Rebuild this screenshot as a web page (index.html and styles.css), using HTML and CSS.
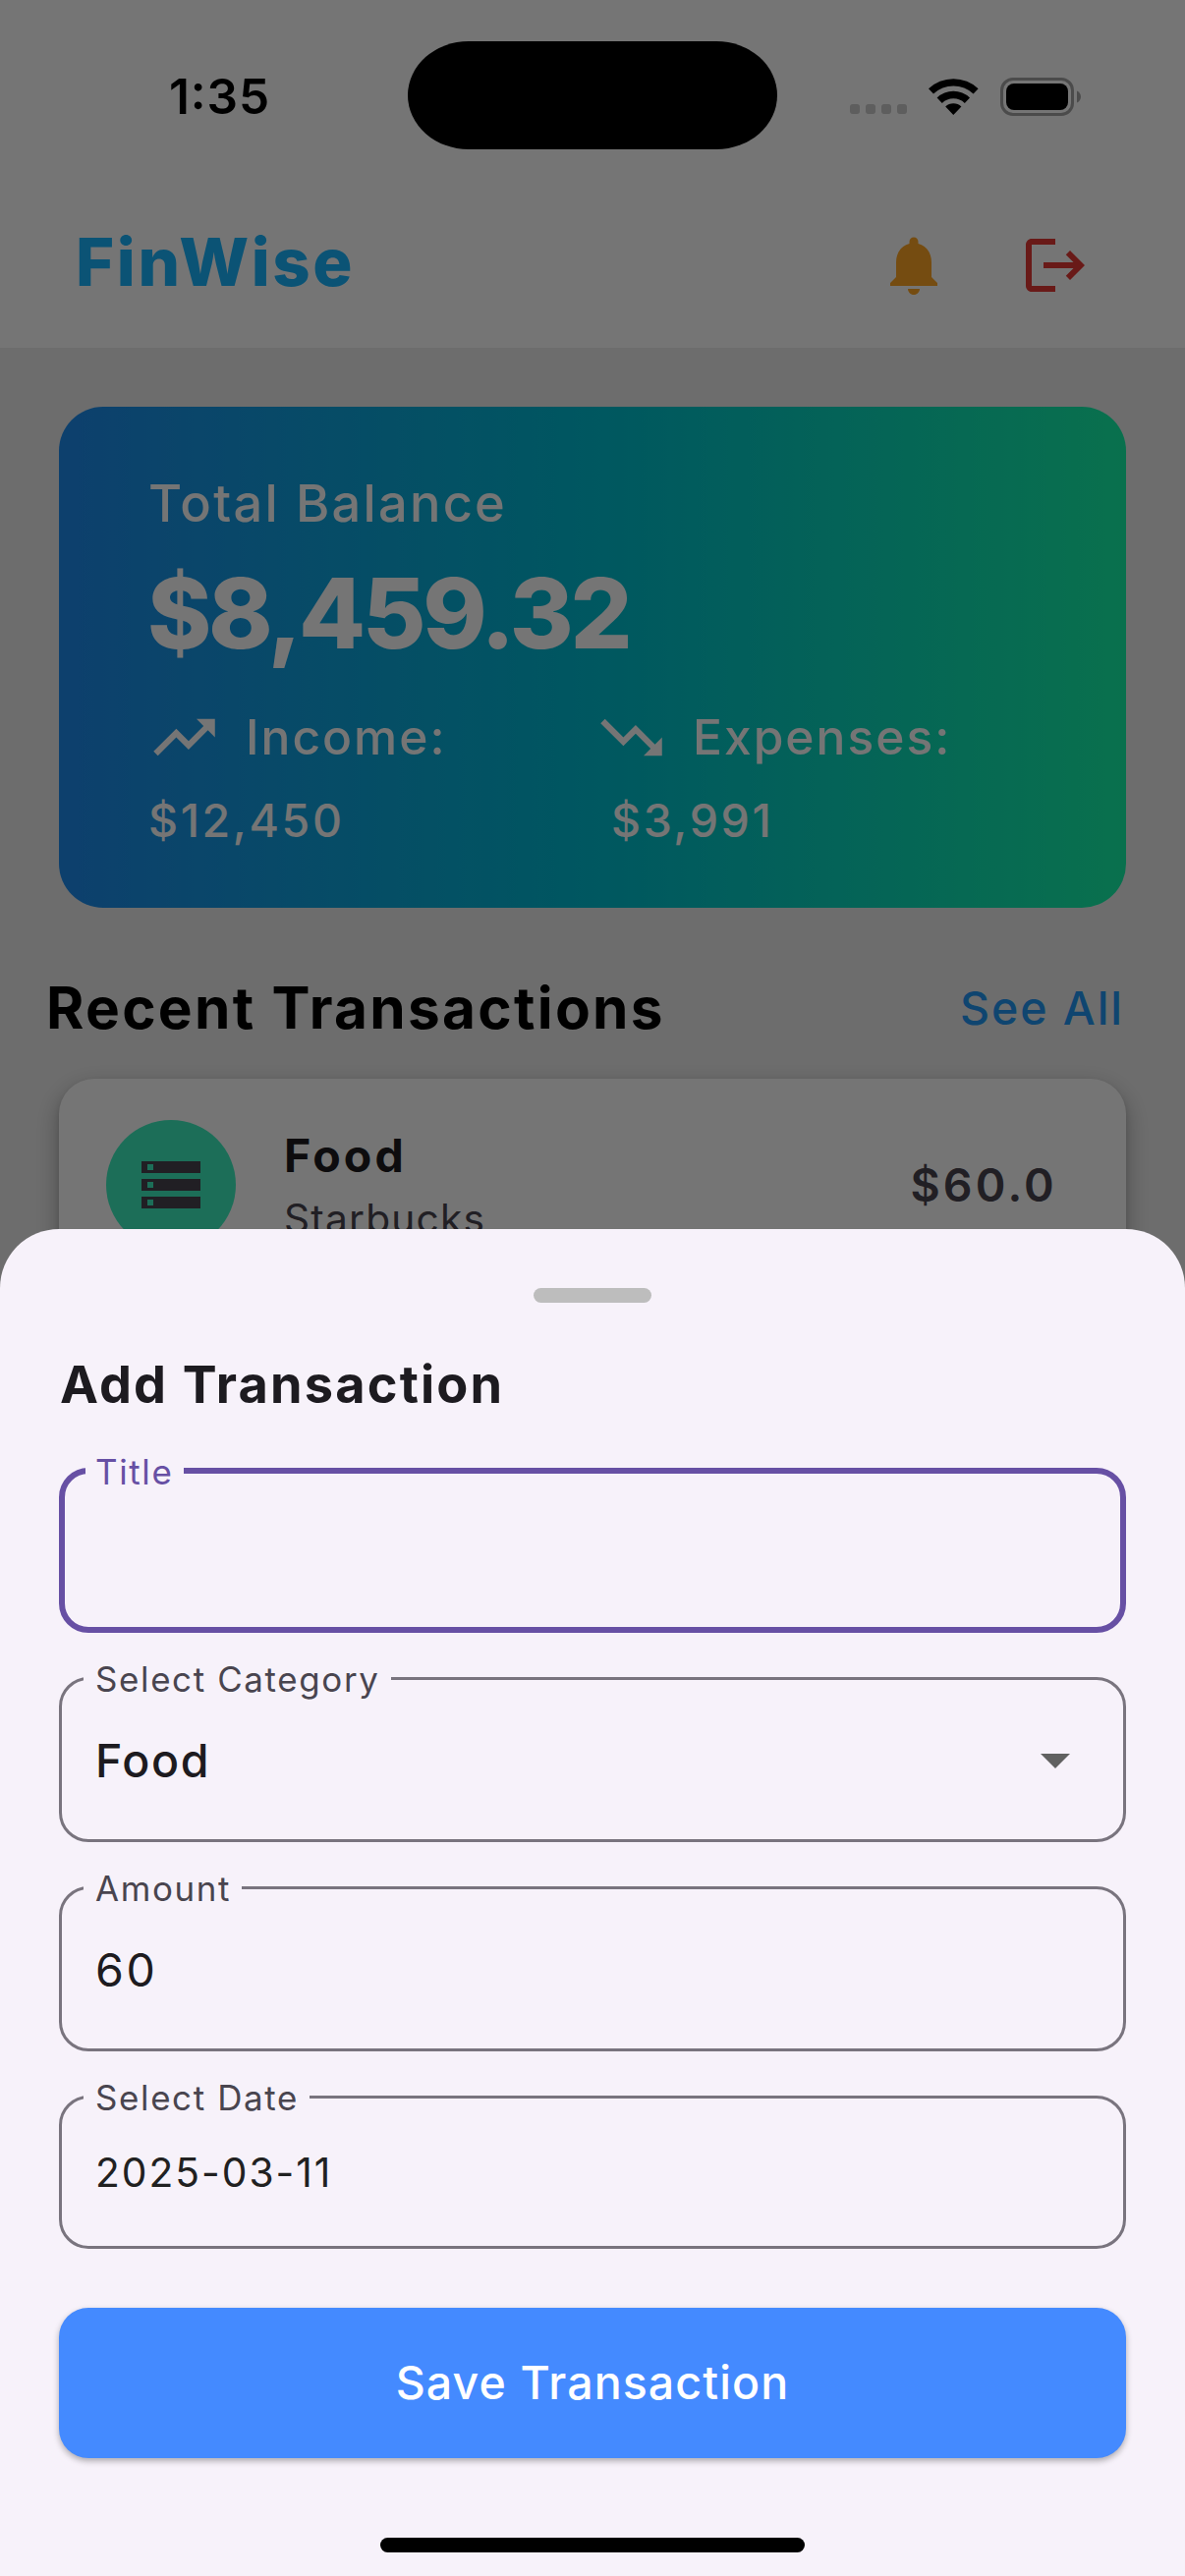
FILE: index.html
```html
<!DOCTYPE html>
<html lang="en">
<head>
<meta charset="utf-8">
<title>FinWise</title>
<link rel="stylesheet" href="styles.css">
</head>
<body>
<div class="screen">
  <div class="status-bar">
    <span class="time">1:35</span>
    <span class="island"></span>
    <span class="dots"><i></i><i></i><i></i><i></i></span>
    <svg class="wifi" viewBox="0 0 51 37"><path d="M0 10.3A36.8 36.8 0 0 1 50.6 10.3L45.6 15.6A29.5 29.5 0 0 0 5 15.6ZM8.6 19.4A24.3 24.3 0 0 1 42 19.4L36.8 24.9A16.7 16.7 0 0 0 13.8 24.9ZM17.2 28.5A11.7 11.7 0 0 1 33.4 28.5L25.3 37Z"/></svg>
    <svg class="battery" viewBox="0 0 82 39"><rect class="battery-case" x="1.5" y="1.5" width="72" height="36" rx="11.5"/><rect x="6" y="6" width="63" height="27" rx="8"/><path class="battery-cap" d="M78 13.5C83.300 15.500 83.300 23.500 78 25.500Z"/></svg>
  </div>

  <header class="app-bar">
    <h1 class="brand">FinWise</h1>
    <svg class="icon icon-bell" viewBox="0 0 24 24"><path d="M12 22c1.100 0 2-.9 2-2h-4c0 1.100.89 2 2 2zm6-6v-5c0-3.070-1.640-5.640-4.500-6.320V4c0-.83-.67-1.500-1.500-1.500s-1.500.67-1.500 1.500v.68C7.630 5.360 6 7.920 6 11v5l-2 2v1h16v-1l-2-2z"/></svg>
    <svg class="icon icon-logout" viewBox="0 0 24 24"><path d="M17 7l-1.410 1.410L18.170 11H8v2h10.170l-2.580 2.580L17 17l5-5zM4 5h8V3H4c-1.100 0-2 .9-2 2v14c0 1.100.9 2 2 2h8v-2H4V5z"/></svg>
  </header>

  <main class="content">
    <section class="balance">
      <div class="balance-label">Total Balance</div>
      <div class="balance-total">$8,459.32</div>
      <div class="flows">
        <span class="flow"><svg class="trend" viewBox="0 0 24 24"><path d="M16 6l2.290 2.290-4.880 4.880-4-4L2 16.590 3.410 18l6-6 4 4 6.300-6.290L22 12V6z"/></svg>Income:</span>
        <span class="flow"><svg class="trend" viewBox="0 0 24 24"><path d="M16 18l2.290-2.290-4.880-4.880-4 4L2 7.410 3.410 6l6 6 4-4 6.300 6.290L22 12v6z"/></svg>Expenses:</span>
      </div>
      <div class="flow-values"><span>$12,450</span><span>$3,991</span></div>
    </section>

    <div class="section-head">
      <h2 class="section-title">Recent Transactions</h2>
      <a class="see-all">See All</a>
    </div>

    <article class="transaction">
      <span class="avatar"><svg class="storage" viewBox="0 0 24 24"><path d="M2 20h20v-4H2v4zm2-3h2v2H4v-2zM2 4v4h20V4H2zm4 3H4V5h2v2zm-4 7h20v-4H2v4zm2-3h2v2H4v-2z"/></svg></span>
      <div class="transaction-text">
        <div class="transaction-name">Food</div>
        <div class="transaction-place">Starbucks</div>
      </div>
      <div class="transaction-amount">$60.0</div>
    </article>
  </main>

  <div class="scrim"></div>

  <section class="sheet">
    <div class="handle"></div>
    <h2 class="sheet-title">Add Transaction</h2>
    <form class="form">
      <div class="field field-focused"><span class="field-label">Title</span></div>
      <div class="field"><span class="field-label">Select Category</span><span class="field-value field-value-medium">Food</span><svg class="arrow" viewBox="0 0 10 5"><path d="M0 0l5 5 5-5z"/></svg></div>
      <div class="field"><span class="field-label">Amount</span><span class="field-value">60</span></div>
      <div class="field field-date"><span class="field-label">Select Date</span><span class="field-value field-value-small">2025-03-11</span></div>
    </form>
    <button class="save" type="button">Save Transaction</button>
    <div class="home-indicator"></div>
  </section>
</div>
</body>
</html>
```
FILE: styles.css
```css
* { box-sizing: border-box; }

body {
  margin: 0;
  font-family: Inter, "Liberation Sans", sans-serif;
}

h1, h2 { margin: 0; }

.screen {
  position: relative;
  width: 1206px;
  height: 2622px;
  overflow: hidden;
  background: #fff;
}

/* Status bar: stays above the scrim */
.status-bar {
  position: relative;
  z-index: 3;
  display: flex;
  align-items: center;
  height: 186px;
  padding: 10px 0 0 172px;
}

.time {
  width: 243px;
  font-size: 49.5px;
  font-weight: 600;
  line-height: 60px;
  letter-spacing: .9px;
  font-feature-settings: "calt";
}

.island {
  width: 376px;
  height: 110px;
  margin-top: -2px;
  border-radius: 62px / 55px;
  background: #000;
}

.dots {
  display: flex;
  gap: 6px;
  margin: 26px 0 0 74px;
}

.dots i {
  width: 10px;
  height: 10px;
  border-radius: 3px;
  background: #5e5e5e;
}

.wifi {
  width: 51px;
  height: 37px;
  margin-left: 22px;
}

.battery {
  width: 82px;
  height: 39px;
  margin-left: 22px;
}

.battery-case {
  fill: none;
  stroke: #4b4b4b;
  stroke-width: 3;
}

.battery-cap { fill: #4b4b4b; }

/* App bar */
.app-bar {
  display: flex;
  align-items: center;
  height: 168px;
  padding: 0 96px 0 77px;
}

.brand {
  flex: 1;
  padding-bottom: 6px;
  color: #1ab6ff;
  font-size: 67px;
  font-weight: 800;
  line-height: 80px;
  letter-spacing: 2.6px;
}

.icon {
  width: 72px;
  height: 72px;
}

.icon-bell { fill: #ffa726; }

.icon-logout {
  margin-left: 72px;
  fill: #e53935;
}

/* Dashboard */
.content {
  height: 2268px;
  padding: 60px 60px 0;
  background: #eee;
}

.balance {
  height: 510px;
  padding: 58px 90px 0;
  border-radius: 45px;
  background: linear-gradient(90deg, #1e8bee, #00bed2 50%, #15f5a9);
  color: #fff;
}

.balance-label {
  padding-left: 1px;
  font-size: 52.3px;
  font-weight: 500;
  line-height: 80px;
  letter-spacing: 2.25px;
}

.balance-total {
  font-size: 99px;
  font-weight: 800;
  line-height: 144px;
  letter-spacing: -3.3px;
}

.flows {
  display: grid;
  grid-template-columns: 455px auto;
  height: 108px;
  align-items: center;
  font-size: 49.7px;
  font-weight: 500;
  line-height: 60px;
  letter-spacing: 2px;
}

.flow {
  display: flex;
  align-items: center;
  gap: 25px;
}

.trend {
  width: 75px;
  height: 75px;
  fill: #fff;
}

.flow-values {
  display: grid;
  grid-template-columns: 471px auto;
  padding-left: 1px;
  font-size: 46.5px;
  font-weight: 500;
  line-height: 62px;
  letter-spacing: 2.6px;
}

.section-head {
  display: flex;
  align-items: center;
  justify-content: space-between;
  height: 174px;
  margin: 0 2px 0 -13px;
  padding-top: 30px;
}

.section-title {
  color: #000;
  font-size: 58.5px;
  font-weight: 700;
  line-height: 72px;
  letter-spacing: 2.3px;
}

.see-all {
  color: #2196f3;
  font-size: 46.5px;
  font-weight: 500;
  line-height: 70px;
  letter-spacing: 1.94px;
}

.transaction {
  display: flex;
  align-items: flex-start;
  height: 216px;
  padding: 42px 70px 0 48px;
  border-radius: 36px;
  background: #fff;
  box-shadow: 0 9px 24px rgba(0, 0, 0, .3), 0 3px 6px rgba(0, 0, 0, .1);
}

.avatar {
  display: flex;
  align-items: center;
  justify-content: center;
  width: 132px;
  height: 132px;
  border-radius: 50%;
  background: #3defbf;
}

.storage {
  width: 72px;
  height: 72px;
  fill: #49454f;
}

.transaction-text {
  flex: 1;
  padding: 6px 0 0 49px;
}

.transaction-name {
  color: #1d1b20;
  font-size: 46.5px;
  font-weight: 700;
  line-height: 60px;
  letter-spacing: 3.2px;
}

.transaction-place {
  margin-top: 5px;
  color: #49454f;
  font-size: 40.7px;
  line-height: 60px;
  letter-spacing: 1.2px;
}

.transaction-amount {
  color: #49454f;
  font-size: 46.5px;
  font-weight: 600;
  line-height: 132px;
  letter-spacing: 3.2px;
}

.scrim {
  position: absolute;
  inset: 0;
  z-index: 2;
  background: rgba(0, 0, 0, .54);
}

/* Bottom sheet */
.sheet {
  position: absolute;
  z-index: 4;
  inset: 1251px 0 0;
  display: flex;
  flex-direction: column;
  padding: 60px 60px 0;
  border-radius: 60px 60px 0 0;
  background: #f7f2fa;
}

.handle {
  align-self: center;
  width: 120px;
  height: 15px;
  border-radius: 8px;
  background: #bdbdbd;
}

.sheet-title {
  margin: 53px 0 55px;
  padding-left: 1px;
  color: #1d1b20;
  font-size: 52.3px;
  font-weight: 700;
  line-height: 60px;
  letter-spacing: 2.15px;
}

.form {
  display: flex;
  flex-direction: column;
  gap: 45px;
}

.field {
  position: relative;
  display: flex;
  align-items: center;
  justify-content: space-between;
  height: 168px;
  padding: 2px 54px 0 34px;
  border: 3px solid #79747e;
  border-radius: 30px;
}

.field-focused { border: 6px solid #6750a4; }

.field-date { height: 156px; }

/* Floating label: its background cuts the notch in the outline */
.field-label {
  position: absolute;
  top: -21px;
  left: 22px;
  padding: 0 11px 0 12px;
  background: #f7f2fa;
  color: #49454f;
  font-size: 34.9px;
  line-height: 40px;
  letter-spacing: 1.65px;
}

.field-focused .field-label {
  top: -22px;
  left: 21px;
  padding-left: 10px;
  color: #6750a4;
}

.field-value {
  color: #1d1b20;
  font-size: 46.5px;
  line-height: 60px;
  letter-spacing: 2.6px;
}

.field-value-medium {
  font-weight: 500;
  letter-spacing: 1.6px;
}

.field-value-small {
  color: #212121;
  font-size: 40.7px;
  letter-spacing: 2px;
}

.arrow {
  width: 30px;
  height: 15px;
  fill: #616161;
}

.save {
  height: 153px;
  margin-top: 60px;
  padding: 0 0 2px;
  border: 0;
  border-radius: 30px;
  background: #448aff;
  box-shadow: 0 3px 6px rgba(0, 0, 0, .3);
  color: #fff;
  font-family: inherit;
  font-size: 46.5px;
  font-weight: 500;
  letter-spacing: 1.1px;
}

.home-indicator {
  align-self: center;
  width: 432px;
  height: 15px;
  margin-top: 81px;
  border-radius: 8px;
  background: #000;
}
```
